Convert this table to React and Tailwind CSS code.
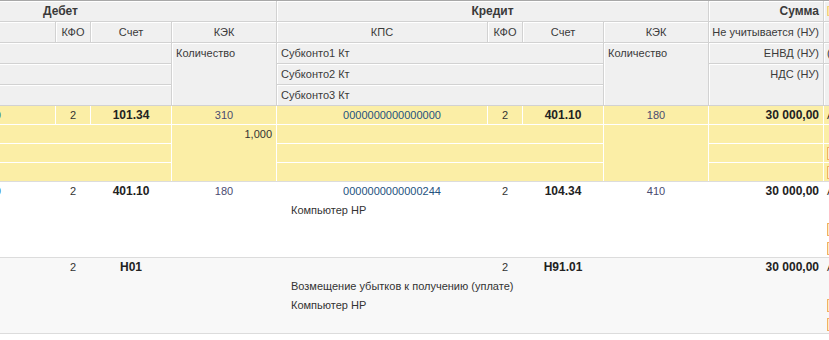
import React from "react";

// header cell look: gray right/bottom rule + white highlight on top/left
const HB =
  "border-r border-b border-[#d2d2d2] shadow-[inset_1px_1px_0_#ffffff] bg-[#f0f0f0]";

function H({ className = "", children }) {
  return (
    <div
      className={`flex items-center px-1 overflow-hidden whitespace-nowrap ${HB} ${className}`}
    >
      {children}
    </div>
  );
}

function Check() {
  return (
    <span className="block w-[13px] h-[13px] border border-[#f2b261] bg-[#fdebc8]" />
  );
}

// ── one side (debit or credit): КПС / КФО / Счет + КЭК block ────────────────
function Side({ b, v, credit }) {
  return (
    <>
      <div className="flex flex-col w-[327px]">
        <div className={`flex h-[19px] border-b ${b}`}>
          <div
            className={`w-[211px] border-r ${b} flex items-center justify-center whitespace-nowrap text-[#24527e] ${
              credit ? "pl-[20px]" : "pl-[4px]"
            }`}
          >
            {v.kps}
          </div>
          <div className={`w-[35px] border-r ${b} flex items-center justify-center`}>
            {v.kfo}
          </div>
          <div
            className={`w-[81px] border-r ${b} flex items-center justify-center font-bold text-[12px] text-[#222]`}
          >
            {v.schet}
          </div>
        </div>
        <div className={`h-[19px] border-b border-r ${b} flex items-center pl-[14px] whitespace-nowrap`}>
          {v.lines?.[0]}
        </div>
        <div className={`h-[19px] border-b border-r ${b} flex items-center pl-[14px] whitespace-nowrap`}>
          {v.lines?.[1]}
        </div>
        <div className={`h-[18px] border-r ${b} flex items-center pl-[14px] whitespace-nowrap`}>
          {v.lines?.[2]}
        </div>
      </div>
      <div className="flex flex-col w-[105px]">
        <div
          className={`h-[19px] border-b border-r ${b} flex items-center justify-center text-[#4a4b70]`}
        >
          {v.kek}
        </div>
        <div className={`h-[56px] border-r ${b} flex justify-end px-1 leading-[19px]`}>
          {v.kol}
        </div>
      </div>
    </>
  );
}

function Row({ sel, bg, d, k, sum }) {
  const b = sel ? "border-white" : "border-transparent";
  return (
    <div className={`flex h-[76px] border-b border-[#dcdcdc] ${bg}`}>
      <Side b={b} v={d} />
      <Side b={b} v={k} credit />
      <div className="flex flex-col w-[115px]">
        <div
          className={`h-[19px] border-b border-r ${b} flex items-center justify-end px-1 font-bold text-[12px] text-[#222]`}
        >
          {sum}
        </div>
        <div className={`h-[19px] border-b border-r ${b}`} />
        <div className={`h-[19px] border-b border-r ${b}`} />
        <div className={`h-[18px] border-r ${b}`} />
      </div>
      <div className="flex flex-col w-[120px]">
        <div className={`h-[19px] border-b ${b} flex items-center pl-[3px]`}>А</div>
        <div className={`h-[19px] border-b ${b}`} />
        <div className={`h-[19px] border-b ${b} flex items-center pl-[3px]`}>
          <Check />
        </div>
        <div className="h-[18px] flex items-center pl-[3px]">
          <Check />
        </div>
      </div>
    </div>
  );
}

const rows = [
  {
    sel: true,
    bg: "bg-[#fbeea6]",
    d: { kps: "0000000000000000", kfo: "2", schet: "101.34", kek: "310", kol: "1,000" },
    k: { kps: "0000000000000000", kfo: "2", schet: "401.10", kek: "180" },
    sum: "30 000,00",
  },
  {
    bg: "bg-white",
    d: { kps: "0000000000000240", kfo: "2", schet: "401.10", kek: "180" },
    k: {
      kps: "0000000000000244",
      kfo: "2",
      schet: "104.34",
      kek: "410",
      lines: ["Компьютер НР"],
    },
    sum: "30 000,00",
  },
  {
    bg: "bg-[#f8f8f8]",
    d: { kps: "", kfo: "2", schet: "Н01" },
    k: {
      kps: "",
      kfo: "2",
      schet: "Н91.01",
      lines: ["Возмещение убытков к получению (уплате)", "Компьютер НР"],
    },
    sum: "30 000,00",
  },
];

export default function App() {
  return (
    <div className="w-[829px] h-[340px] overflow-hidden bg-white font-['Liberation_Sans',Arial,sans-serif] text-[11px] text-[#333]">
      {/* table is scrolled horizontally, left part is out of view */}
      <div className="ml-[-155px] w-max border-t border-[#a8a8a8]">
        {/* ── Header ── */}
        <div className="text-[#3a3a3a]">
          <div className="flex h-[21px]">
            <H className="w-[432px] justify-center font-bold text-[12px]">Дебет</H>
            <H className="w-[432px] justify-center font-bold text-[12px]">Кредит</H>
            <H className="w-[115px] justify-end font-bold text-[12px]">Сумма</H>
            <H className="w-[120px] !px-[3px]">
              <span className="block w-[10px] h-[10px] bg-[#fbe7a8] border border-[#f3d27a]" />
            </H>
          </div>
          <div className="flex h-[21px]">
            <H className="w-[211px] justify-center">КПС</H>
            <H className="w-[35px] justify-center">КФО</H>
            <H className="w-[81px] justify-center">Счет</H>
            <H className="w-[105px] justify-center">КЭК</H>
            <H className="w-[211px] justify-center">КПС</H>
            <H className="w-[35px] justify-center">КФО</H>
            <H className="w-[81px] justify-center">Счет</H>
            <H className="w-[105px] justify-center">КЭК</H>
            <H className="w-[115px] justify-end">Не учитывается (НУ)</H>
            <H className="w-[120px]" />
          </div>
          <div className="flex">
            <div className="flex flex-col w-[327px]">
              <H className="h-[21px]" />
              <H className="h-[21px]" />
              <H className="h-[21px]" />
            </div>
            <H className="w-[105px] h-[63px] !items-start leading-[21px]">Количество</H>
            <div className="flex flex-col w-[327px]">
              <H className="h-[21px]">Субконто1 Кт</H>
              <H className="h-[21px]">Субконто2 Кт</H>
              <H className="h-[21px]">Субконто3 Кт</H>
            </div>
            <H className="w-[105px] h-[63px] !items-start leading-[21px]">Количество</H>
            <div className="flex flex-col w-[115px]">
              <H className="h-[21px] justify-end">ЕНВД (НУ)</H>
              <H className="h-[42px] justify-end !items-start leading-[21px]">НДС (НУ)</H>
            </div>
            <div className="flex flex-col w-[120px]">
              <H className="h-[21px] !px-[3px]">(НУ)</H>
              <H className="h-[42px]" />
            </div>
          </div>
        </div>

        {/* ── Rows ── */}
        {rows.map((r, i) => (
          <Row key={i} {...r} />
        ))}
      </div>
    </div>
  );
}
